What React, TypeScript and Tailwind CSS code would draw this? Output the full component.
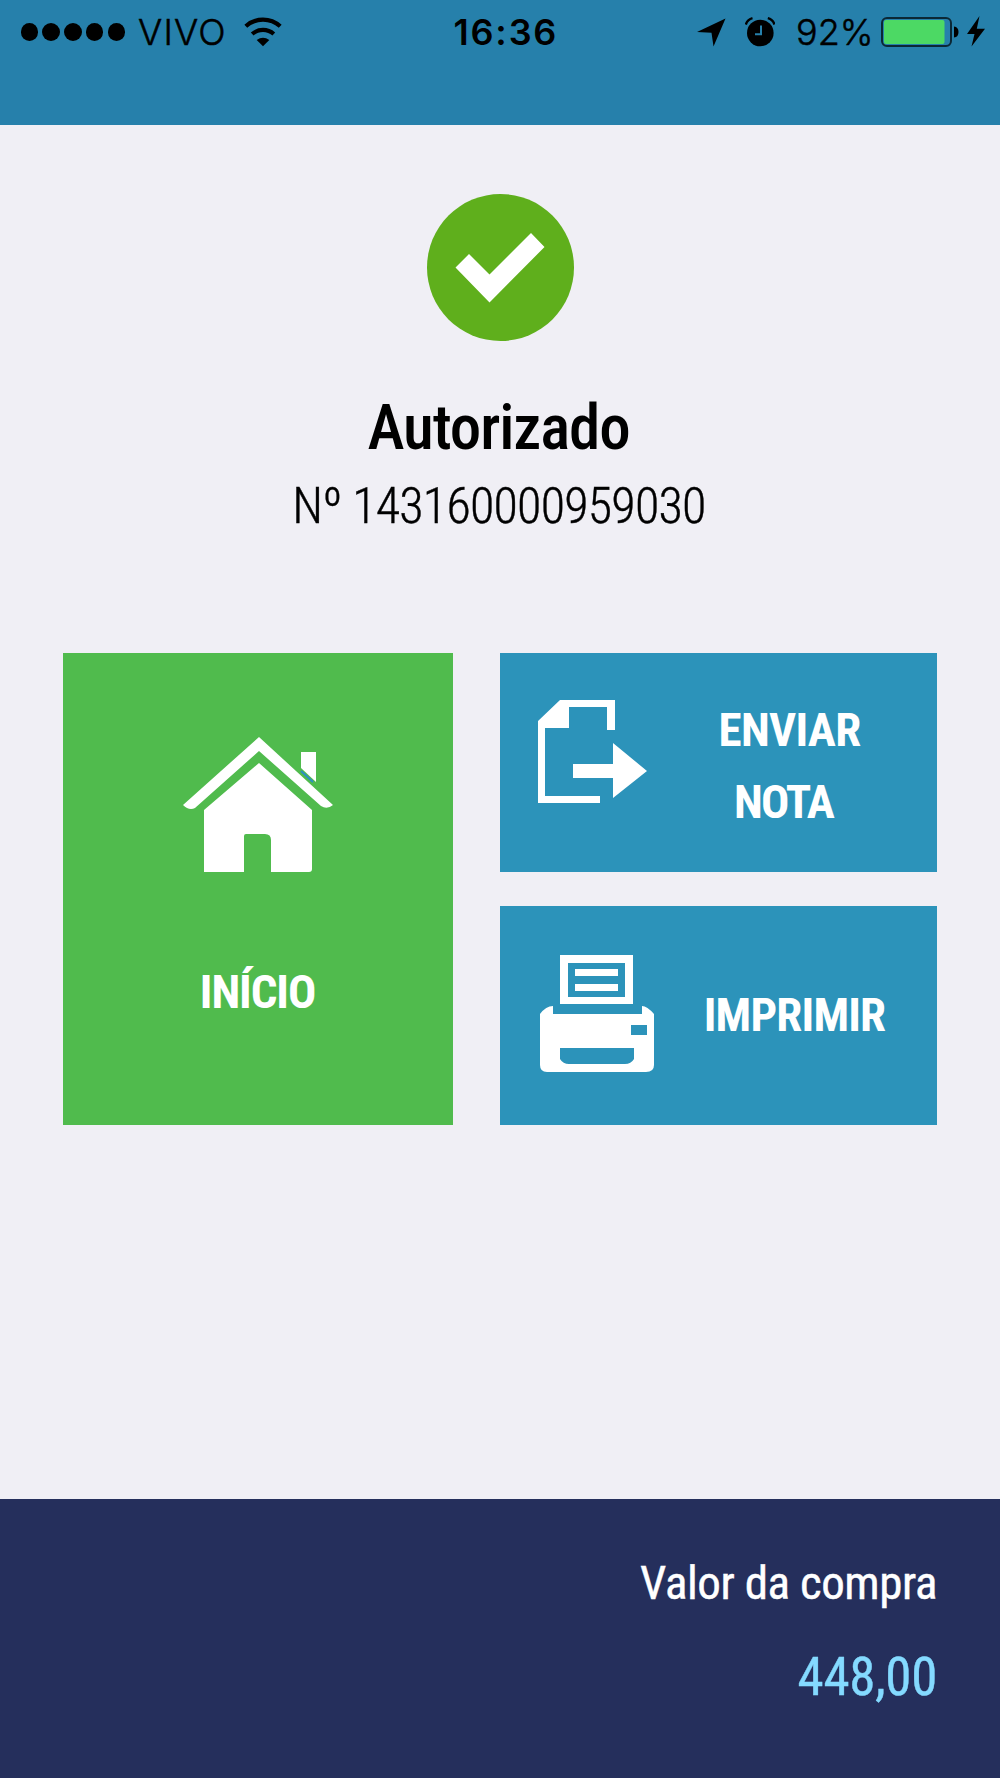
const signalDots = [0, 1, 2, 3, 4];

function StatusBar() {
  return (
    <div className="flex h-16 items-center pl-[20.5px] font-['Inter',sans-serif] text-[36px] leading-none text-black">
      <div className="flex w-[117.5px] shrink-0 gap-[4.3px]">
        {signalDots.map((dot) => (
          <span key={dot} className="h-[17.5px] w-[17.5px] shrink-0 rounded-full bg-black" />
        ))}
      </div>
      <span className="w-[106px] shrink-0 whitespace-nowrap font-light tracking-[1.2px] [-webkit-text-stroke:0.5px_#000]">VIVO</span>
      <svg className="w-[38px] shrink-0" height="30" viewBox="0 0 38 30" fill="none" stroke="#000">
        <path d="M1.8 9.3A25.5 25.5 0 0 1 36.2 9.3" strokeWidth="4.2" />
        <path d="M8.2 17A16.3 16.3 0 0 1 29.8 17" strokeWidth="4.2" />
        <path d="M12.7 23Q19 18.3 25.3 23L19 29.2Z" fill="#000" stroke="none" />
      </svg>
      <span className="ml-[171.5px] w-[243.5px] shrink-0 whitespace-nowrap font-semibold tracking-[1.8px]">16:36</span>
      <svg className="w-[29px] shrink-0" height="30" viewBox="0 0 29 30">
        <path d="M28.5 1.5L0 15L14.5 15.8L16.5 29.5Z" />
      </svg>
      <svg className="ml-[19px] w-[30px] shrink-0" height="30" viewBox="0 0 30 30">
        <circle cx="15.3" cy="16" r="13.3" />
        <path d="M.8 7.5Q2.5 2.5 7.5 1.2M29.5 7.5Q27.8 2.5 22.8 1.2" stroke="#000" strokeWidth="2.4" fill="none" />
        <path d="M16 8.5V17.2H10" stroke="#2680ab" strokeWidth="2" fill="none" />
      </svg>
      <span className="ml-[21px] w-[85px] shrink-0 whitespace-nowrap font-light [-webkit-text-stroke:0.5px_#000]">92%</span>
      <svg className="w-[78px] shrink-0" height="32" viewBox="0 0 78 32">
        <rect x="1" y="2" width="69" height="28" rx="5" fill="none" stroke="#0b2836" strokeWidth="2" />
        <rect x="3" y="4" width="60.5" height="24" rx="2" fill="#4cd964" />
        <path d="M73 10.5Q77.5 11 77.5 16T73 21.5Z" />
      </svg>
      <svg className="ml-[8px] w-[18px] shrink-0" height="32" viewBox="0 0 18 32">
        <path d="M12.5 0L0 18H7.5L4.5 30.5L18 12.8H9.8Z" />
      </svg>
    </div>
  );
}

function CheckIcon() {
  return (
    <svg width="147" height="147" viewBox="0 0 147 147">
      <circle cx="73.5" cy="73.5" r="73.5" fill="#5faf1c" />
      <path d="M28.5 73.5L42 60L62.5 80.5L104 39L117.5 53L62.5 108.5Z" fill="#fff" />
    </svg>
  );
}

function HomeIcon() {
  return (
    <svg width="150" height="136" viewBox="0 0 150 136" fill="#fff">
      <path d="M118 15H133V45L118 31Z" />
      <path d="M118 34L130 45" stroke="#2c8fc4" strokeWidth="2" />
      <path d="M76 0L150 68Q144 73 138 69L76 14L12 71Q6 74 0 68Z" />
      <path d="M76 26L129 73V132Q129 135 126 135H88V103Q88 97 82 97H63Q61 97 61 99V135H21V73Z" />
    </svg>
  );
}

function SendIcon() {
  return (
    <svg width="110" height="104" viewBox="0 0 110 104" fill="#fff">
      <path d="M22 0H77V30H69V7H31V28H7V96H62V103H0V21Z" />
      <path d="M35 64H75V43L109 71L75 98V78H35Z" />
    </svg>
  );
}

function PrinterIcon() {
  return (
    <svg width="116" height="119" viewBox="0 0 116 119" fill="#fff">
      <path fillRule="evenodd" d="M21 1H94V50H21ZM29 9V43H86V9Z" />
      <path d="M36 15H79V22H36ZM36 30H79V37H36Z" />
      <path fillRule="evenodd" d="M14 52V60H103V52Q108 52 115 60V111Q115 118 107 118H8Q1 118 1 111V60Q7 52 14 52ZM92 71V81H108V71ZM21 94V105Q24 110 30 110H86Q92 110 95 105V94Z" />
    </svg>
  );
}

export default function App() {
  return (
    <div className="flex h-[1778px] w-[1000px] flex-col overflow-hidden bg-[#f0eff5] font-['Roboto_Condensed','Roboto',sans-serif] [font-stretch:75%]">
      <header className="h-[125px] shrink-0 bg-[#2680ab]">
        <StatusBar />
      </header>

      <main className="flex flex-1 flex-col items-center pt-[69px]">
        <CheckIcon />
        <h1 className="mt-[51px] whitespace-nowrap pr-[3px] text-[63px] font-medium leading-[72px] tracking-[-1.1px] text-black">Autorizado</h1>
        <p className="mt-3 whitespace-nowrap pr-[2px] text-[50px] font-light leading-[60px] tracking-[-0.75px] text-black [-webkit-text-stroke:0.4px_#000]">Nº 143160000959030</p>

        <div className="mt-[117px] flex w-[874px] gap-[47px]">
          <button className="flex h-[472px] w-[390px] flex-col items-center bg-[#50bb4d] pt-[84px] text-white">
            <HomeIcon />
            <span className="mt-[83px] whitespace-nowrap pr-px text-[47px] font-bold leading-[72px] tracking-[-1.1px]">INÍCIO</span>
          </button>
          <div className="flex flex-col gap-[34px]">
            <button className="flex h-[219px] w-[437px] items-center bg-[#2c93ba] pl-[38px] text-white">
              <span className="-mt-[21px]"><SendIcon /></span>
              <span className="flex flex-1 flex-col items-center whitespace-nowrap pr-[6px] pt-[7px] text-[47px] font-bold leading-[72px]">
                <span className="tracking-[-0.7px]">ENVIAR</span>
                <span className="pr-[12px] tracking-[-1.8px]">NOTA</span>
              </span>
            </button>
            <button className="flex h-[219px] w-[437px] items-center bg-[#2c93ba] pl-[39px] text-white">
              <span className="-mt-[5px]"><PrinterIcon /></span>
              <span className="flex flex-1 justify-center whitespace-nowrap pb-px pr-[3px] text-[47px] font-bold leading-[72px] tracking-[-0.8px]">IMPRIMIR</span>
            </button>
          </div>
        </div>
      </main>

      <footer className="flex h-[279px] shrink-0 flex-col items-end bg-[#252f5c] pr-[63px] pt-12">
        <p className="whitespace-nowrap text-[47px] leading-[72px] tracking-[-0.45px] text-white [-webkit-text-stroke:0.4px_#fff]">Valor da compra</p>
        <p className="mt-[22px] whitespace-nowrap text-[53px] leading-[72px] tracking-[-0.3px] text-[#84daff] [-webkit-text-stroke:0.4px_#84daff]">448,00</p>
      </footer>
    </div>
  );
}
